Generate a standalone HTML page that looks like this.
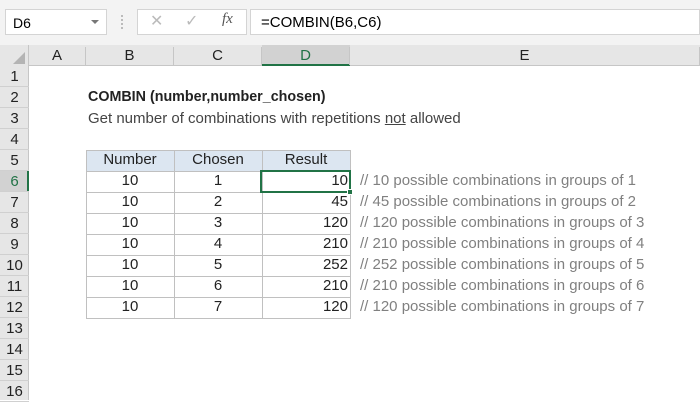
<!DOCTYPE html>
<html><head><style>
body{margin:0;width:700px;height:400px;overflow:hidden;background:#fff;font-family:"Liberation Sans",Arial,sans-serif;position:relative}
.a{position:absolute;box-sizing:border-box}
.t{font-size:14px;color:#222}
</style></head><body>
<div class="a" style="left:0;top:0;width:700px;height:45px;background:#f3f3f3"></div>
<div class="a" style="left:5px;top:9px;width:102px;height:26px;background:#fff;border:1px solid #d4d4d4;font-size:14px;padding:5px 0 0 7px">D6</div>
<div class="a" style="left:91px;top:20px;width:0;height:0;border-left:4px solid transparent;border-right:4px solid transparent;border-top:4px solid #777"></div>
<div class="a" style="left:121px;top:15px;width:2px;height:14px;border-left:2px dotted #bbb"></div>
<div class="a" style="left:137px;top:9px;width:110px;height:26px;background:#fff;border:1px solid #d4d4d4"></div>
<div class="a" style="left:150px;top:11px;font-size:16px;color:#bbb">✕</div>
<div class="a" style="left:185px;top:11px;font-size:16px;color:#bbb">✓</div>
<div class="a" style="left:222px;top:11px;font-size:15px;font-style:italic;font-family:'Liberation Serif',serif;color:#555">fx</div>
<div class="a" style="left:250px;top:9px;width:450px;height:26px;background:#fff;border:1px solid #d4d4d4;font-size:15px;padding:4px 0 0 10px">=COMBIN(B6,C6)</div>
<div class="a" style="left:0;top:45px;width:700px;height:21px;background:#e6e6e6;border-bottom:1px solid #c6c6c6"></div>
<div class="a" style="left:0;top:45px;width:29px;height:355px;background:#e6e6e6;border-right:1px solid #c6c6c6"></div>
<div class="a" style="left:13px;top:52px;width:0;height:0;border-left:12px solid transparent;border-bottom:12px solid #b4b4b4"></div>
<div class="a" style="left:262px;top:45px;width:88px;height:21px;background:#d2d2d2;border-bottom:2px solid #217346"></div>
<div class="a" style="left:0;top:171px;width:29px;height:21px;background:#d2d2d2;border-right:2px solid #217346"></div>
<div id="h"></div>
<script>
var cols=[[29,86,'A'],[86,174,'B'],[174,262,'C'],[262,350,'D'],[350,700,'E']],s='';
cols.forEach(function(c){s+='<div class="a t" style="left:'+c[0]+'px;top:47px;width:'+(c[1]-c[0])+'px;text-align:center;border-right:1px solid #c6c6c6;height:18px;font-size:15px;color:'+(c[2]=='D'?'#217346':'#222')+'">'+c[2]+'</div>';});
for(var r=1;r<=16;r++){var y=66+(r-1)*21;s+='<div class="a t" style="left:0;top:'+y+'px;width:29px;height:21px;border-bottom:1px solid #d0d0d0;text-align:center;padding-top:2px;font-size:15px;color:'+(r==6?'#217346':'#222')+'">'+r+'</div>';}
var res=[10,45,120,210,252,210,120];
s+='<div class="a" style="left:86px;top:150px;width:264px;height:21px;background:#dce6f1"></div>';
for(var i=0;i<8;i++){var y=150+i*21;
s+='<div class="a" style="left:86px;top:'+y+'px;width:265px;height:22px;border:1px solid #c0c0c0"></div>';}
[174,262].forEach(function(x){s+='<div class="a" style="left:'+x+'px;top:150px;width:1px;height:168px;background:#c0c0c0"></div>';});
function c(x,w,y,txt,al){return '<div class="a t" style="left:'+x+'px;top:'+(y+1)+'px;width:'+w+'px;font-size:15px;text-align:'+al+'">'+txt+'</div>';}
s+=c(86,88,150,'Number','center')+c(174,88,150,'Chosen','center')+c(262,88,150,'Result','center');
for(var i=0;i<7;i++){var y=171+i*21;
s+=c(86,88,y,'10','center')+c(174,88,y,i+1,'center')+c(262,86,y,res[i],'right');
s+='<div class="a t" style="left:360px;top:'+(y+1)+'px;font-size:15px;color:#808080;white-space:nowrap">// '+res[i]+' possible combinations in groups of '+(i+1)+'</div>';}
s+='<div class="a" style="left:260px;top:170px;width:91px;height:23px;border:2px solid #217346"></div><div class="a" style="left:347px;top:189px;width:6px;height:6px;background:#217346;border:1px solid #fff"></div>';
s+='<div class="a t" style="left:88px;top:89px;font-weight:bold;font-size:14.3px">COMBIN (number,number_chosen)</div>';
s+='<div class="a t" style="left:88px;top:110px;color:#444;font-size:15px">Get number of combinations with repetitions <u>not</u> allowed</div>';
document.getElementById('h').innerHTML=s;
</script>
</body></html>
